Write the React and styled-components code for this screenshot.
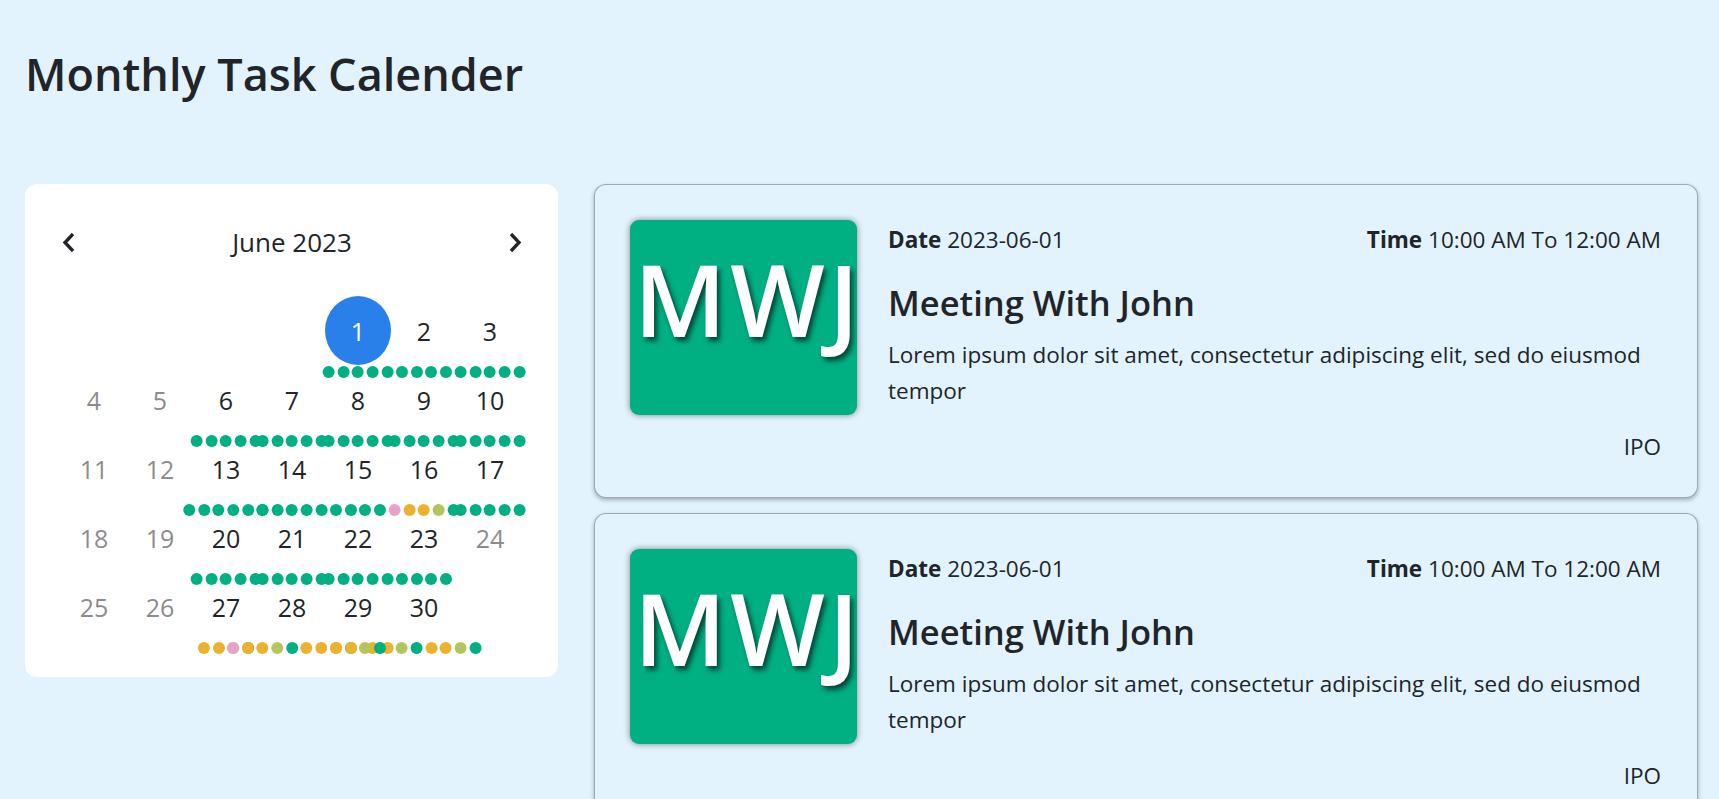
import React from 'react';
import styled, { createGlobalStyle } from 'styled-components';

const GlobalStyle = createGlobalStyle`
  * {
    box-sizing: border-box;
  }

  html,
  body {
    overflow: hidden;
  }

  body {
    margin: 0;
    background: #e2f3fe;
    color: #212529;
    font-family: 'Open Sans', 'Noto Sans', sans-serif;
  }
`;

const COLORS = {
  G: '#00b081',
  O: '#ebb22f',
  P: '#e6a3c8',
  L: '#b5c55e',
};

// task dots per day, one letter per task
const TASKS = {
  1: 'GGGGG',
  2: 'GGGG',
  3: 'GGGGG',
  6: 'GGGGG',
  7: 'GGGGG',
  8: 'GGGGG',
  9: 'GGGGG',
  10: 'GGGGG',
  13: 'GGGGGG',
  14: 'GGGGG',
  15: 'GGGG',
  16: 'POOLG',
  17: 'GGGGG',
  20: 'GGGGG',
  21: 'GGGGG',
  22: 'GGGGG',
  23: 'GGGG',
  27: 'OOPO',
  28: 'LGOLGOOOO',
  29: 'OGLG',
  30: 'OOLGOOLG',
};

const EVENTS = [
  {
    id: 1,
    initials: 'MWJ',
    date: '2023-06-01',
    time: '10:00 AM To 12:00 AM',
    title: 'Meeting With John',
    text: 'Lorem ipsum dolor sit amet, consectetur adipiscing elit, sed do eiusmod tempor',
    tag: 'IPO',
  },
  {
    id: 2,
    initials: 'MWJ',
    date: '2023-06-01',
    time: '10:00 AM To 12:00 AM',
    title: 'Meeting With John',
    text: 'Lorem ipsum dolor sit amet, consectetur adipiscing elit, sed do eiusmod tempor',
    tag: 'IPO',
  },
];

const Page = styled.div`
  padding: 0 21px 0 25px;
`;

const Title = styled.h1`
  margin: 0;
  padding-top: 47px;
  font-size: 45px;
  font-weight: 600;
  line-height: 1.2;
`;

const Layout = styled.div`
  display: flex;
  align-items: flex-start;
  gap: 36px;
  margin-top: 83px;
`;

const CalendarCard = styled.div`
  flex: none;
  width: 533px;
  padding: 36px 35px 36px 36px;
  background: #fff;
  border-radius: 12px;
`;

const CalHeader = styled.div`
  display: flex;
  align-items: center;
  justify-content: space-between;
  height: 44px;
  margin-bottom: 32px;
  padding: 0 1px;
`;

const NavButton = styled.button`
  display: flex;
  padding: 0;
  border: 0;
  background: none;
  color: #212529;
  cursor: pointer;
`;

const MonthLabel = styled.span`
  font-size: 26px;
`;

const DayGrid = styled.div`
  display: grid;
  grid-template-columns: repeat(7, 66px);
  grid-auto-rows: 69px;
`;

const DayCell = styled.div`
  position: relative;
  display: flex;
  align-items: center;
  justify-content: center;
  grid-column: ${({ $col }) => $col || 'auto'};
  border-radius: 50%;
  background: ${({ $selected }) => ($selected ? '#2a80ea' : 'transparent')};
  color: ${({ $selected, $empty }) => ($selected ? '#fff' : $empty ? '#8c8c8c' : '#212529')};
  font-size: 25px;
`;

const Dots = styled.div`
  position: absolute;
  top: calc(100% + 1px);
  left: 50%;
  z-index: ${({ $z }) => $z};
  display: flex;
  gap: 2.7px;
  transform: translateX(-50%);
`;

const Dot = styled.span`
  flex: none;
  width: 12px;
  height: 12px;
  border-radius: 50%;
  background: ${({ $color }) => $color};
`;

const EventList = styled.div`
  flex: 1;
  display: flex;
  flex-direction: column;
  gap: 15px;
`;

const EventCard = styled.div`
  padding: 35px 36px 35px 35px;
  border: 1px solid rgba(0, 0, 0, 0.3);
  border-radius: 12px;
  background: #e2f3fe;
  box-shadow: 0 2px 4px rgba(0, 0, 0, 0.3);
`;

const EventBody = styled.div`
  display: flex;
  gap: 31px;
`;

const Badge = styled.div`
  flex: none;
  width: 227px;
  height: 195px;
  padding-top: 28px;
  padding-left: 4px;
  border-radius: 9px;
  background: #00af82;
  box-shadow: 0 0 6px rgba(0, 0, 0, 0.45);
  color: #fff;
  font-size: 100px;
  font-weight: 600;
  letter-spacing: 4px;
  line-height: 1;
  text-align: center;
  text-shadow: 3px 4px 5px rgba(0, 0, 0, 0.6);
  white-space: nowrap;
`;

const EventInfo = styled.div`
  flex: 1;
  min-width: 0;
  font-size: 22.5px;
`;

const MetaRow = styled.div`
  display: flex;
  justify-content: space-between;
  margin-top: 5px;
  line-height: 30px;

  b {
    font-weight: 700;
  }
`;

const EventTitle = styled.h3`
  margin: 27px 0 14px;
  font-size: 34.5px;
  font-weight: 600;
  line-height: 1.2;
`;

const EventText = styled.p`
  margin: 0;
  line-height: 36px;
`;

const EventFooter = styled.div`
  margin-top: 17px;
  font-size: 22.5px;
  line-height: 30px;
  text-align: right;
`;

const Chevron = ({ dir }) => (
  <svg width="13" height="21" viewBox="0 0 13 21" fill="none">
    <path
      d={dir === 'left' ? 'M11 2 L3 10.5 L11 19' : 'M2 2 L10 10.5 L2 19'}
      stroke="currentColor"
      strokeWidth="3.3"
    />
  </svg>
);

const Calendar = () => {
  const days = Array.from({ length: 30 }, (_, i) => i + 1);

  return (
    <CalendarCard>
      <CalHeader>
        <NavButton aria-label="previous month">
          <Chevron dir="left" />
        </NavButton>
        <MonthLabel>June 2023</MonthLabel>
        <NavButton aria-label="next month">
          <Chevron dir="right" />
        </NavButton>
      </CalHeader>
      <DayGrid>
        {days.map((day) => {
          const tasks = TASKS[day];
          return (
            <DayCell key={day} $col={day === 1 ? 5 : null} $selected={day === 1} $empty={!tasks}>
              {day}
              {tasks && (
                <Dots $z={40 - day}>
                  {tasks.split('').map((c, i) => (
                    <Dot key={i} $color={COLORS[c]} />
                  ))}
                </Dots>
              )}
            </DayCell>
          );
        })}
      </DayGrid>
    </CalendarCard>
  );
};

const Event = ({ event }) => (
  <EventCard>
    <EventBody>
      <Badge>{event.initials}</Badge>
      <EventInfo>
        <MetaRow>
          <span>
            <b>Date</b> {event.date}
          </span>
          <span>
            <b>Time</b> {event.time}
          </span>
        </MetaRow>
        <EventTitle>{event.title}</EventTitle>
        <EventText>{event.text}</EventText>
      </EventInfo>
    </EventBody>
    <EventFooter>{event.tag}</EventFooter>
  </EventCard>
);

export default function App() {
  return (
    <Page>
      <GlobalStyle />
      <Title>Monthly Task Calender</Title>
      <Layout>
        <Calendar />
        <EventList>
          {EVENTS.map((e) => (
            <Event key={e.id} event={e} />
          ))}
        </EventList>
      </Layout>
    </Page>
  );
}
